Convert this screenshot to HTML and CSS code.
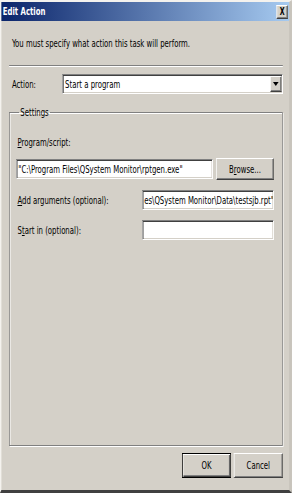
FILE: index.html
```html
<!DOCTYPE html>
<html lang="en">

<head>
    <meta charset="UTF-8">
    <title>Edit Action</title>
    <link rel="stylesheet" href="styles.css">
</head>

<body>
    <div class="screen">
        <div class="window">
            <div class="titlebar">
                <span class="title">Edit Action</span>
                <span class="close">X</span>
            </div>
            <div class="body">
                <p class="intro">You must specify what action this task will perform.</p>
                <div class="separator"></div>

                <div class="action-row">
                    <label>Action:</label>
                    <div class="combo">
                        <span class="combo-text">Start a program</span>
                        <span class="combo-btn"><span class="arrow"></span></span>
                    </div>
                </div>

                <fieldset class="group">
                    <legend>Settings</legend>

                    <label class="field-label"><u>P</u>rogram/script:</label>
                    <div class="program-row">
                        <div class="textbox wide">"C:\Program Files\QSystem Monitor\rptgen.exe"</div>
                        <button class="btn browse">B<u>r</u>owse...</button>
                    </div>

                    <div class="opt-row">
                        <label><u>A</u>dd arguments (optional):</label>
                        <div class="textbox short">es\QSystem Monitor\Data\testsjb.rpt"</div>
                    </div>
                    <div class="opt-row">
                        <label>S<u>t</u>art in (optional):</label>
                        <div class="textbox short"></div>
                    </div>
                </fieldset>

                <div class="buttons">
                    <button class="btn default">OK</button>
                    <button class="btn">Cancel</button>
                </div>
            </div>
        </div>
    </div>
</body>
</html>
```

FILE: styles.css
```css
body {
    margin: 0;
    padding: 0;
    overflow: hidden;
    background: #d4d0c8;
    font-family: "DejaVu Sans Condensed", "DejaVu Sans", sans-serif;
    font-stretch: condensed;
    font-size: 11px;
    color: #000;
}

.screen {
    width: 292px;
    height: 493px;
    overflow: hidden;
}

/* the whole dialog is drawn at its natural width and squeezed like the shot */
.window {
    width: 417px;
    height: 493px;
    box-sizing: border-box;
    transform: scaleX(0.7);
    transform-origin: left top;
    border-left: 2px solid #f4f2ee;
    border-top: 2px solid #f4f2ee;
    border-right: 4px solid #c8c4bc;
    border-bottom: 3px solid #404040;
    display: flex;
    flex-direction: column;
}

.titlebar {
    height: 19px;
    background: linear-gradient(to right, #0a246a, #a6caf0);
    display: flex;
    align-items: center;
    justify-content: space-between;
    padding: 0 2px 0 2px;
}

.title {
    color: #fff;
    font-weight: bold;
    font-size: 11px;
}

.close {
    width: 14px;
    height: 12px;
    background: #d4d0c8;
    border: 1px solid;
    border-color: #fff #404040 #404040 #fff;
    box-shadow: inset -1px -1px 0 #808080;
    font-family: "DejaVu Sans", sans-serif;
    font-size: 10px;
    font-weight: bold;
    line-height: 12px;
    text-align: center;
}

.body {
    flex: 1;
    padding: 0 9px 0 11px;
    display: flex;
    flex-direction: column;
}

.intro {
    margin: 16px 0 0 4px;
    line-height: 13px;
}

.separator {
    margin-top: 15px;
    height: 0;
    border-top: 1px solid #808080;
    border-bottom: 1px solid #fff;
}

.action-row {
    display: flex;
    align-items: center;
    margin-top: 7px;
}

.action-row label {
    width: 72px;
    padding-left: 4px;
}

.combo {
    flex: 1;
    height: 20px;
    box-sizing: border-box;
    background: #fff;
    border: 1px solid;
    border-color: #808080 #fff #fff #808080;
    box-shadow: inset 1px 1px 0 #404040, inset -1px -1px 0 #d4d0c8;
    display: flex;
    align-items: center;
}

.combo-text {
    flex: 1;
    padding-left: 3px;
}

.combo-btn {
    width: 14px;
    height: 14px;
    margin-right: 1px;
    background: #d4d0c8;
    border: 1px solid;
    border-color: #fff #404040 #404040 #fff;
    box-shadow: inset -1px -1px 0 #808080;
    display: flex;
    align-items: center;
    justify-content: center;
}

.arrow {
    width: 0;
    height: 0;
    border-left: 4px solid transparent;
    border-right: 4px solid transparent;
    border-top: 4px solid #000;
}

.group {
    margin: 12px 0 0;
    padding: 17px 12px 0 9px;
    height: 321px;
    border: 1px solid #808080;
    box-shadow: 1px 1px 0 #fff, inset 1px 1px 0 #fff;
}

.group legend {
    padding: 0 2px;
    margin-left: 4px;
    line-height: 13px;
}

.field-label {
    display: block;
    padding-left: 2px;
    line-height: 13px;
}

.program-row {
    display: flex;
    align-items: center;
    justify-content: space-between;
    margin-top: 9px;
}

.textbox {
    height: 20px;
    box-sizing: border-box;
    background: #fff;
    border: 1px solid;
    border-color: #808080 #fff #fff #808080;
    box-shadow: inset 1px 1px 0 #404040, inset -1px -1px 0 #d4d0c8;
    padding: 2px 2px 0;
    line-height: 15px;
    white-space: nowrap;
    overflow: hidden;
}

.textbox.wide {
    width: 281px;
}

.textbox.short {
    width: 188px;
}

.btn {
    font: inherit;
    font-stretch: condensed;
    background: #d4d0c8;
    border: 1px solid;
    border-color: #fff #404040 #404040 #fff;
    box-shadow: inset -1px -1px 0 #808080;
    padding: 0;
    color: #000;
}

.browse {
    width: 82px;
    height: 22px;
}

.opt-row {
    display: flex;
    align-items: center;
    justify-content: space-between;
    margin-top: 10px;
    padding-left: 2px;
}

.opt-row + .opt-row {
    margin-top: 10px;
}

.buttons {
    display: flex;
    justify-content: flex-end;
    gap: 4px;
    margin-top: 7px;
}

.buttons .btn {
    width: 70px;
    height: 25px;
}

.btn.default {
    border-color: #000;
    box-shadow: inset 1px 1px 0 #fff, inset -1px -1px 0 #404040, inset -2px -2px 0 #808080;
}
```
